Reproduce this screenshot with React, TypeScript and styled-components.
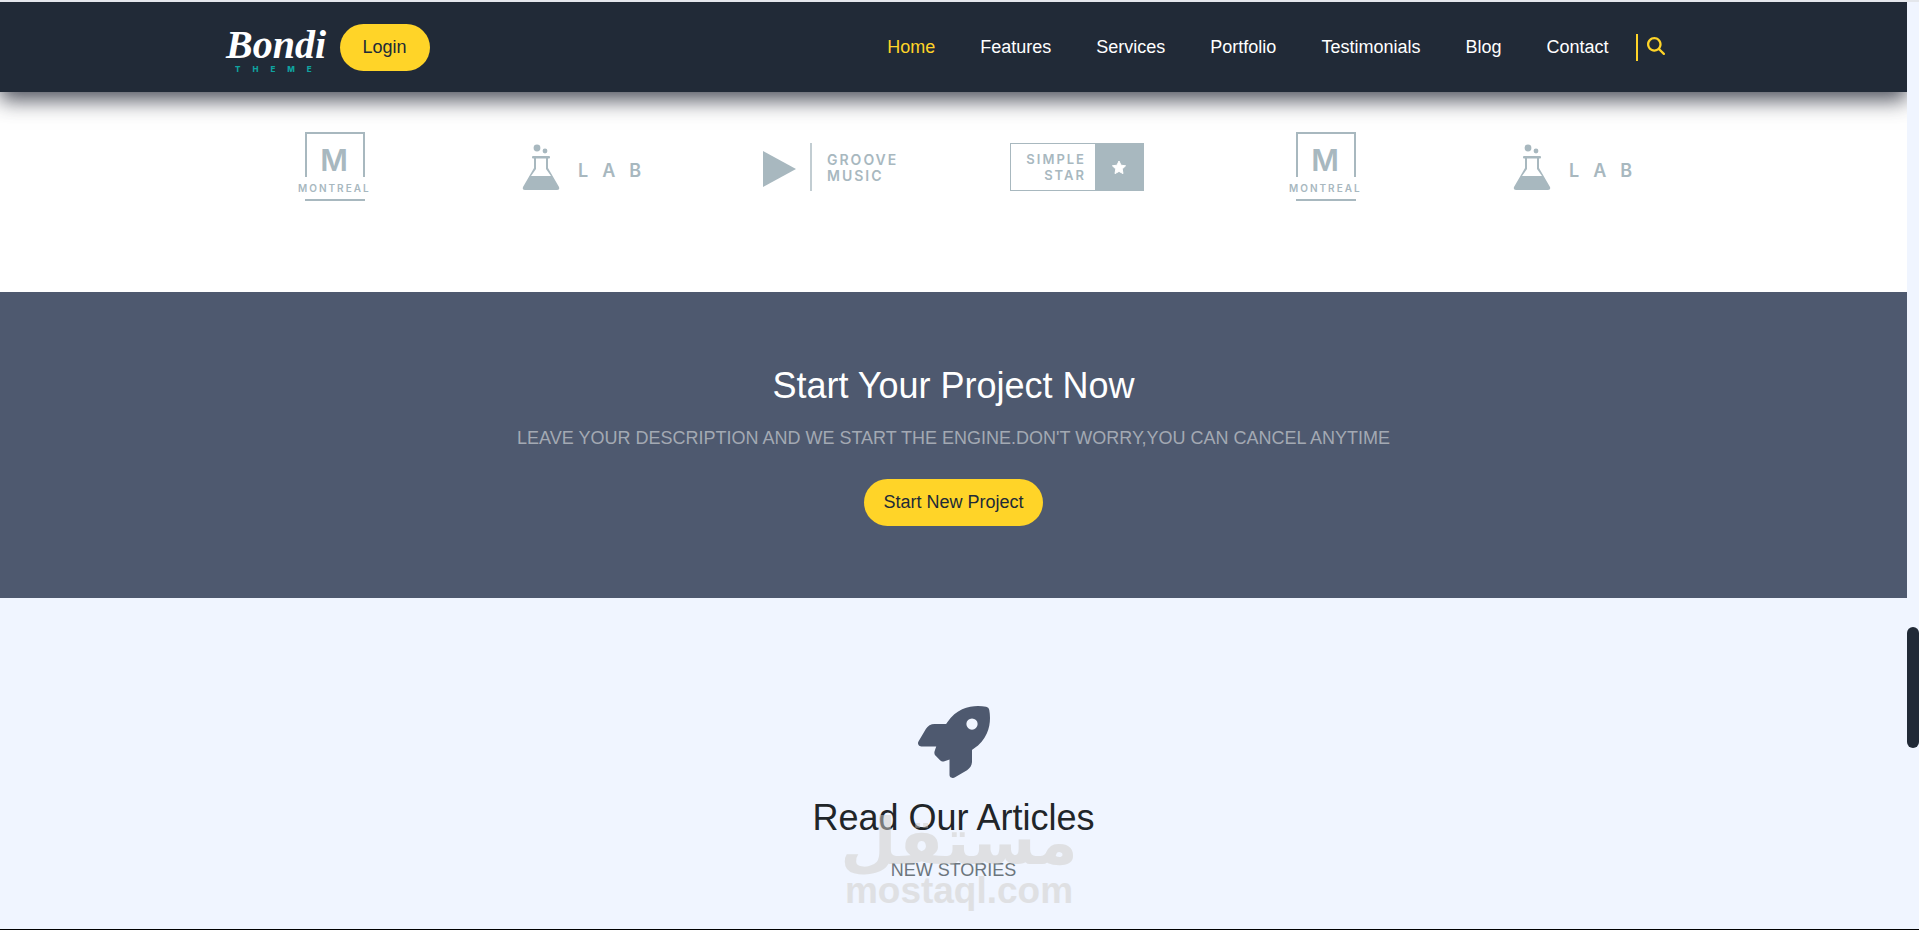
import React from "react";
import styled, { createGlobalStyle } from "styled-components";
import { FaMagnifyingGlass, FaRocket } from "react-icons/fa6";

const color = {
  navy: "#212a37",
  slate: "#4e596f",
  yellow: "#ffd428",
  ice: "#f0f5ff",
  client: "#a8b8bf",
  teal: "#0fa3a0",
};

const GlobalStyle = createGlobalStyle`
  * { box-sizing: border-box; }
  body {
    margin: 0;
    font-family: "Liberation Sans", Arial, sans-serif;
    font-size: 18px;
    line-height: 27px;
    color: #212529;
    background: ${color.ice};
  }
`;

const Shell = styled.div`
  display: flex;
  min-height: 100vh;
  border-top: 2px solid #e4e7ec;
  border-bottom: 1px solid #000;
`;

const Page = styled.div`
  flex: 1;
  min-width: 0;
  display: flex;
  flex-direction: column;
`;

const ScrollTrack = styled.div`
  position: relative;
  width: 12px;
  background: ${color.ice};
`;

const ScrollThumb = styled.div`
  position: absolute;
  top: 625px;
  width: 12px;
  height: 121px;
  border-radius: 6px;
  background: ${color.navy};
`;

const Header = styled.header`
  position: relative;
  z-index: 1;
  background: ${color.navy};
  box-shadow: 0 8px 20px rgba(33, 36, 50, 0.8);
  clip-path: inset(0 0 -40px 0);
`;

const Container = styled.div`
  max-width: 1486px;
  margin: 0 auto;
`;

const HeaderBar = styled(Container)`
  display: flex;
  align-items: center;
  height: 90px;
  padding: 0 14px;
`;

const Brand = styled.a`
  display: block;
  margin-right: 15px;
  svg { display: block; overflow: visible; }
`;

const PillButton = styled.button<{ $pad: number }>`
  height: 47px;
  padding: 0 ${(p) => p.$pad}px;
  border: 0;
  border-radius: 24px;
  background: ${color.yellow};
  color: ${color.navy};
  font: inherit;
  cursor: pointer;
`;

const Nav = styled.nav`
  display: flex;
  align-items: center;
  gap: 45px;
  margin-left: auto;
`;

const NavLink = styled.a<{ $active?: boolean }>`
  color: ${(p) => (p.$active ? color.yellow : "#fff")};
  text-decoration: none;
`;

const SearchButton = styled.button`
  display: flex;
  align-items: center;
  height: 27px;
  margin-left: 27px;
  padding: 0 18px 2px 9px;
  border: 0;
  border-left: 2px solid ${color.yellow};
  background: none;
  color: ${color.yellow};
  font-size: 18px;
  cursor: pointer;
`;

const Clients = styled.section`
  padding: 39px 0 89px;
  background: #fff;
`;

const ClientRow = styled(Container)`
  display: grid;
  grid-template-columns: repeat(6, 1fr);
  justify-items: center;
  svg { display: block; overflow: visible; }
`;

const Band = styled.section`
  display: flex;
  flex-direction: column;
  align-items: center;
  padding: 72px 16px;
  text-align: center;
  background: ${color.slate};
`;

const Articles = styled(Band)`
  flex: 1;
  padding: 108px 16px 45px;
  background: ${color.ice};
`;

const Title = styled.h2<{ $light?: boolean }>`
  margin: 0 0 18px;
  font-size: 36px;
  line-height: 43px;
  font-weight: 400;
  color: ${(p) => (p.$light ? "#fff" : "#212529")};
`;

const Lead = styled.p<{ $light?: boolean }>`
  margin: 0;
  text-transform: uppercase;
  color: ${(p) => (p.$light ? "#a3a9b3" : "#6c757d")};
`;

const CtaLead = styled(Lead)`
  margin-bottom: 27px;
`;

const RocketIcon = styled(FaRocket)`
  width: 72px;
  height: 72px;
  margin-bottom: 18px;
  color: ${color.slate};
`;

const StoriesBlock = styled.div`
  position: relative;
`;

const Watermark = styled.div`
  position: absolute;
  left: 50%;
  bottom: -38px;
  margin-left: -110px;
  width: 230px;
  pointer-events: none;
  svg { display: block; overflow: visible; }
`;

const BondiLogo = () => (
  <svg width="100" height="56" viewBox="0 0 100 56" role="img" aria-label="Bondi Theme">
    <text x="1" y="39" fill="#fff" fontFamily="Liberation Serif, serif" fontSize="40" fontWeight="700" fontStyle="italic">
      Bondi
    </text>
    <text x="10" y="53" fill={color.teal} fontFamily="Inter, sans-serif" fontSize="8" fontWeight="800" letterSpacing="12">
      THEME
    </text>
  </svg>
);

const logoFont = "Inter, sans-serif";

const Montreal = () => (
  <svg width="136" height="72" viewBox="0 0 136 72" fill={color.client}>
    <path d="M40 46V2H98V46" fill="none" stroke={color.client} strokeWidth="2" />
    <text x="68" y="40" textAnchor="middle" fontFamily={logoFont} fontSize="30" fontWeight="600">M</text>
    <text x="32" y="61" fontFamily={logoFont} fontSize="10" fontWeight="600" letterSpacing="2">MONTREAL</text>
    <rect x="39" y="68" width="60" height="2" />
  </svg>
);

const Lab = () => (
  <svg width="136" height="72" viewBox="0 0 136 72" fill={color.client}>
    <circle cx="23" cy="17" r="3.4" />
    <circle cx="31" cy="20" r="2.4" />
    <rect x="18" y="25" width="18" height="2.4" rx="1" />
    <path
      fillRule="evenodd"
      d="M20 26H34V37L45 56Q46 59 43 59H11Q8 59 9 56L20 37ZM22 27V38L17 45H37L32 38V27Z"
    />
    <text x="64" y="46" fontFamily={logoFont} fontSize="18" fontWeight="600" letterSpacing="14">LAB</text>
  </svg>
);

const Groove = () => (
  <svg width="136" height="72" viewBox="0 0 136 72" fill={color.client}>
    <path d="M1 20L34 38L1 56Z" />
    <rect x="48" y="12" width="2" height="48" opacity="0.7" />
    <text fontFamily={logoFont} fontSize="14" fontWeight="600" letterSpacing="2">
      <tspan x="65" y="34">GROOVE</tspan>
      <tspan x="65" y="50">MUSIC</tspan>
    </text>
  </svg>
);

const SimpleStar = () => (
  <svg width="136" height="72" viewBox="0 0 136 72" fill={color.client}>
    <rect x="1.5" y="12.5" width="133" height="47" fill="none" stroke={color.client} />
    <rect x="86" y="12" width="49" height="48" />
    <path
      fill="#fff"
      stroke="#fff"
      strokeLinejoin="round"
      d="M110 30l2 4.2 4.6.6-3.4 3.2.8 4.6-4-2.2-4 2.2.8-4.6-3.4-3.2 4.6-.6z"
    />
    <text fontFamily={logoFont} fontSize="13" fontWeight="600" letterSpacing="2" textAnchor="end">
      <tspan x="77" y="33">SIMPLE</tspan>
      <tspan x="77" y="49">STAR</tspan>
    </text>
  </svg>
);

const clients = [Montreal, Lab, Groove, SimpleStar, Montreal, Lab];
const links = ["Home", "Features", "Services", "Portfolio", "Testimonials", "Blog", "Contact"];

export default function App() {
  return (
    <>
      <GlobalStyle />
      <Shell>
        <Page>
          <Header>
            <HeaderBar>
              <Brand href="#home">
                <BondiLogo />
              </Brand>
              <PillButton type="button" $pad={23}>Login</PillButton>
              <Nav>
                {links.map((label, i) => (
                  <NavLink key={label} href={`#${label.toLowerCase()}`} $active={i === 0}>
                    {label}
                  </NavLink>
                ))}
              </Nav>
              <SearchButton type="button" aria-label="Search">
                <FaMagnifyingGlass />
              </SearchButton>
            </HeaderBar>
          </Header>
          <Clients>
            <ClientRow>
              {clients.map((Logo, i) => (
                <Logo key={i} />
              ))}
            </ClientRow>
          </Clients>
          <Band>
            <Title $light>Start Your Project Now</Title>
            <CtaLead $light>
              Leave your description and we start the engine.Don't worry,you can cancel anytime
            </CtaLead>
            <PillButton type="button" $pad={19}>Start New Project</PillButton>
          </Band>
          <Articles>
            <RocketIcon />
            <Title>Read Our Articles</Title>
            <StoriesBlock>
              <Lead>New Stories</Lead>
              <Watermark>
                <svg width="230" height="124" viewBox="0 0 230 124" fill="#cfcdc8" opacity="0.5">
                  <text x="115" y="66" textAnchor="middle" fontFamily="DejaVu Sans, sans-serif" fontWeight="700" fontSize="65">
                    مستقل
                  </text>
                  <text x="115" y="105" textAnchor="middle" fontFamily="Liberation Sans, sans-serif" fontWeight="700" fontSize="37">
                    mostaql.com
                  </text>
                </svg>
              </Watermark>
            </StoriesBlock>
          </Articles>
        </Page>
        <ScrollTrack>
          <ScrollThumb />
        </ScrollTrack>
      </Shell>
    </>
  );
}
